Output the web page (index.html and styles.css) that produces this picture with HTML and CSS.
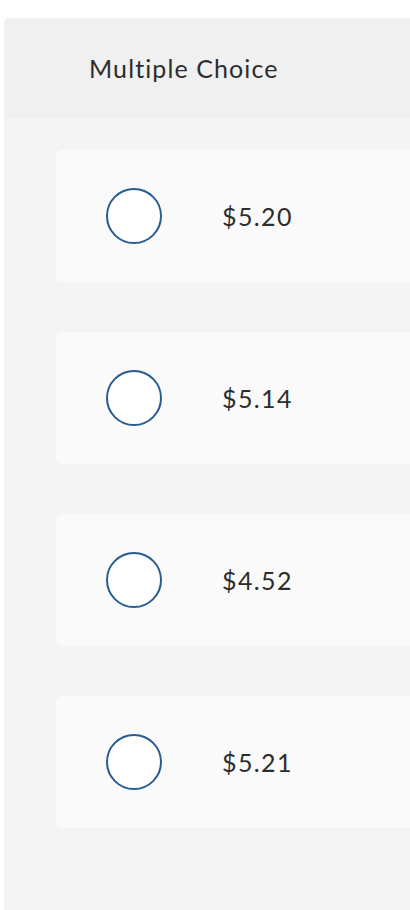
FILE: index.html
```html
<!DOCTYPE html>
<html>
<head>
<meta charset="utf-8">
<link rel="stylesheet" href="styles.css">
</head>
<body>
<div class="panel">
  <div class="header">Multiple Choice</div>
  <div class="body">
    <div class="option"><span class="radio"></span><span class="label">$5.20</span></div>
    <div class="option"><span class="radio"></span><span class="label">$5.14</span></div>
    <div class="option"><span class="radio"></span><span class="label">$4.52</span></div>
    <div class="option"><span class="radio"></span><span class="label">$5.21</span></div>
  </div>
</div>
</body>
</html>
```
FILE: styles.css
```css
html, body {
  margin: 0;
  padding: 0;
  background: #ffffff;
}
body {
  font-family: "Lato", "Open Sans", sans-serif;
  color: #2d2d2d;
}
.panel {
  margin: 18px 0 0 4px;
  border-radius: 5px 0 0 0;
  overflow: hidden;
  background: #f4f4f4;
}
.header {
  height: 100px;
  background: #f0f0f0;
  display: flex;
  align-items: center;
  padding-left: 85px;
  font-size: 25px;
  letter-spacing: 1.1px;
}
.body {
  display: flex;
  flex-direction: column;
  gap: 50px;
  padding: 32px 0 82px 52px;
}
.option {
  height: 132px;
  background: #fafafa;
  border-radius: 6px 0 0 6px;
  display: flex;
  align-items: center;
  padding-left: 50px;
}
.radio {
  width: 52px;
  height: 52px;
  border: 2px solid #285c92;
  border-radius: 50%;
  background: #ffffff;
  flex: none;
}
.label {
  margin-left: 60px;
  font-size: 25px;
  letter-spacing: 1.4px;
}
```
